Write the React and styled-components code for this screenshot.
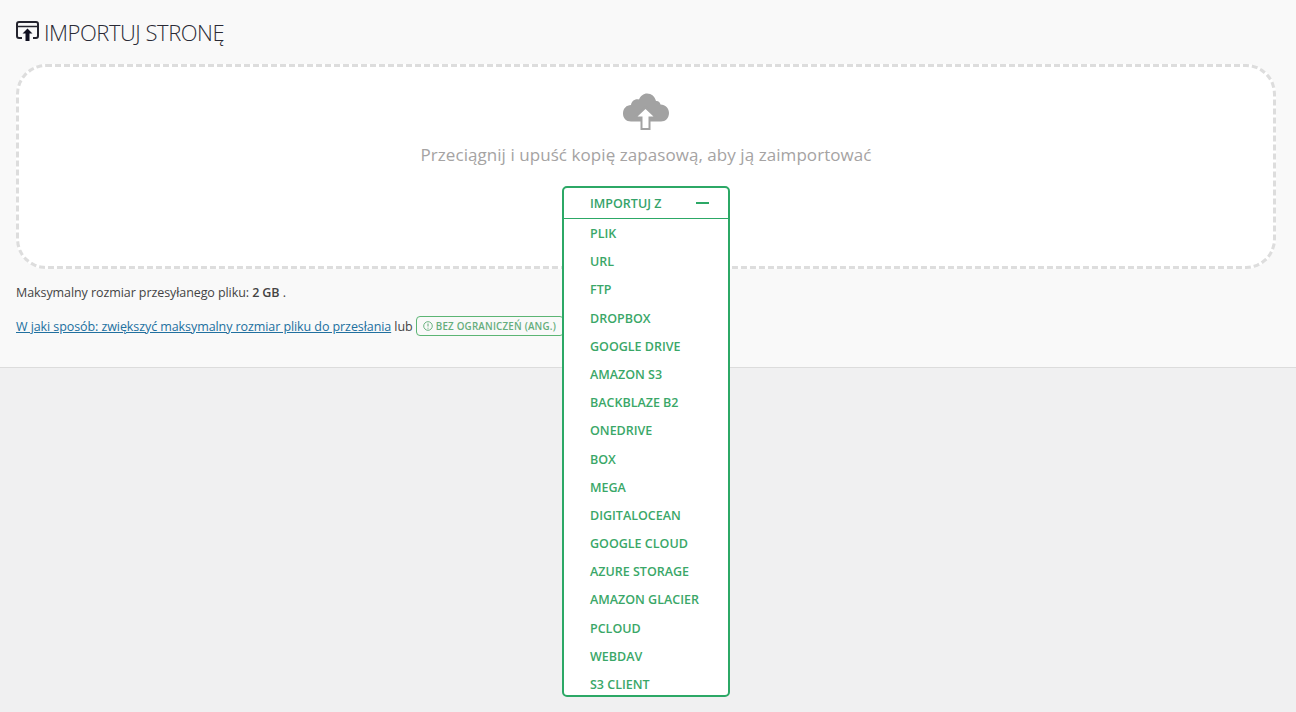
import React from 'react';
import styled, { createGlobalStyle } from 'styled-components';

const GlobalStyle = createGlobalStyle`
  html, body {
    margin: 0;
    padding: 0;
    height: 100%;
    overflow: hidden;
    background: #f0f0f1;
    font-family: "Open Sans", "Noto Sans", sans-serif;
  }
`;

const Panel = styled.div`
  background: #f9f9f9;
  border-bottom: 1px solid #dcdcdc;
  height: 368px;
  padding: 0 20px 0 16px;
  box-sizing: border-box;
`;

const Title = styled.h1`
  display: flex;
  align-items: center;
  gap: 5px;
  margin: 0;
  height: 64px;
  padding-bottom: 1px;
  box-sizing: border-box;
  font-size: 22px;
  font-weight: 300;
  letter-spacing: -0.47px;
  color: #2a2a35;
`;

const DropZone = styled.div`
  box-sizing: border-box;
  height: 205px;
  background: #fff;
  border: 3px dashed #ddd;
  border-radius: 30px;
  display: flex;
  flex-direction: column;
  align-items: center;
  padding-top: 26px;
`;

const DropText = styled.div`
  margin-top: 12px;
  font-size: 17px;
  line-height: 24px;
  letter-spacing: 0.06px;
  color: #a5a3a3;
`;

const MenuSlot = styled.div`
  position: relative;
  margin-top: 19px;
  width: 168px;
  height: 33px;
`;

const Menu = styled.div`
  position: absolute;
  top: 0;
  left: 0;
  z-index: 2;
  box-sizing: border-box;
  width: 168px;
  height: 511px;
  background: #fff;
  border: 2px solid #2ca866;
  border-radius: 5px;
  overflow: hidden;
`;

const MenuHead = styled.div`
  display: flex;
  align-items: center;
  justify-content: space-between;
  box-sizing: border-box;
  height: 31px;
  padding: 0 19px 0 26px;
  border-bottom: 1px solid #2ca866;
  font-size: 12.5px;
  font-weight: 600;
  color: #35a36a;
`;

const Minus = styled.span`
  width: 13px;
  height: 2px;
  background: #2ca866;
`;

const MenuList = styled.div`
  display: flex;
  flex-direction: column;
  padding-top: 1px;
`;

const MenuItem = styled.div`
  height: 28.2px;
  line-height: 28px;
  padding-left: 26px;
  font-size: 12.5px;
  font-weight: 600;
  white-space: nowrap;
  color: #3aa768;
`;

const Note = styled.p`
  margin: 14px 0 0;
  font-size: 12.5px;
  line-height: 20px;
  letter-spacing: -0.08px;
  color: #444;
  strong {
    font-weight: 600;
  }
`;

const HelpRow = styled.p`
  display: flex;
  align-items: center;
  margin: 13px 0 0;
  height: 20px;
  font-size: 12.5px;
  letter-spacing: -0.08px;
  color: #444;
  white-space: pre;
`;

const HelpLink = styled.a`
  color: #21709f;
  text-decoration: underline;
`;

const Badge = styled.span`
  display: inline-flex;
  align-items: center;
  gap: 3px;
  box-sizing: border-box;
  height: 20px;
  padding: 0 7px 0 6px;
  border: 1px solid #5cb574;
  border-radius: 4px;
  font-size: 9.800px;
  font-weight: 600;
  letter-spacing: 0.2px;
  white-space: nowrap;
  color: #65ad7c;
`;

const items = [
  'Plik', 'URL', 'FTP', 'Dropbox', 'Google Drive', 'Amazon S3', 'Backblaze B2',
  'OneDrive', 'Box', 'Mega', 'DigitalOcean', 'Google Cloud', 'Azure Storage',
  'Amazon Glacier', 'pCloud', 'WebDAV', 'S3 Client',
];

const ImportIcon = () => (
  <svg width="23" height="21" viewBox="0 0 23 21">
    <path d="M6 17H3a2 2 0 0 1-2-2V3a2 2 0 0 1 2-2h17a2 2 0 0 1 2 2v12a2 2 0 0 1-2 2h-3" fill="none" stroke="#24242e" strokeWidth="2" />
    <path d="M1 5.500h21" stroke="#24242e" strokeWidth="1.500" />
    <path d="M11.500 7.500l5 5h-3V20h-4v-7.500h-3z" fill="#101020" />
  </svg>
);

const CloudIcon = () => (
  <svg width="48" height="38" viewBox="0 0 48 38">
    <path d="M9 28.500C4 28.500 1 25 1 20.500 1 15.500 4.500 12 9 12 9.500 8 13 5.500 17 6.500 18.500 3 21.500 0.500 25 0.500 29.500 0.500 33 3.500 34 8 36 7.500 38 9 38.500 11.500 43.500 11.500 47 15.500 47 20 47 25 43.500 28.500 39 28.500z" fill="#a2a2a2" />
    <path d="M23.500 13l11 11h-6v13h-10V24h-6z" fill="#a2a2a2" />
    <path d="M23.500 16l8 7.500h-5v11.500h-6V23.500h-5z" fill="#fff" />
  </svg>
);

const InfoIcon = () => (
  <svg width="10" height="10" viewBox="0 0 10 10">
    <circle cx="5" cy="5" r="4.300" fill="none" stroke="#5cab74" strokeWidth="0.900" />
    <path d="M5 2.500v3M5 6.700v1" stroke="#5cab74" strokeWidth="1" />
  </svg>
);

export default function App() {
  return (
    <>
      <GlobalStyle />
      <Panel>
        <Title>
          <ImportIcon />
          IMPORTUJ STRONĘ
        </Title>
        <DropZone>
          <CloudIcon />
          <DropText>Przeciągnij i upuść kopię zapasową, aby ją zaimportować</DropText>
          <MenuSlot>
            <Menu>
              <MenuHead>
                IMPORTUJ Z
                <Minus />
              </MenuHead>
              <MenuList>
                {items.map((item) => (
                  <MenuItem key={item}>{item.toUpperCase()}</MenuItem>
                ))}
              </MenuList>
            </Menu>
          </MenuSlot>
        </DropZone>
        <Note>
          Maksymalny rozmiar przesyłanego pliku: <strong>2 GB</strong> .
        </Note>
        <HelpRow>
          <HelpLink href="#">W jaki sposób: zwiększyć maksymalny rozmiar pliku do przesłania</HelpLink>
          {' lub '}
          <Badge>
            <InfoIcon />
            BEZ OGRANICZEŃ (ANG.)
          </Badge>
        </HelpRow>
      </Panel>
    </>
  );
}
